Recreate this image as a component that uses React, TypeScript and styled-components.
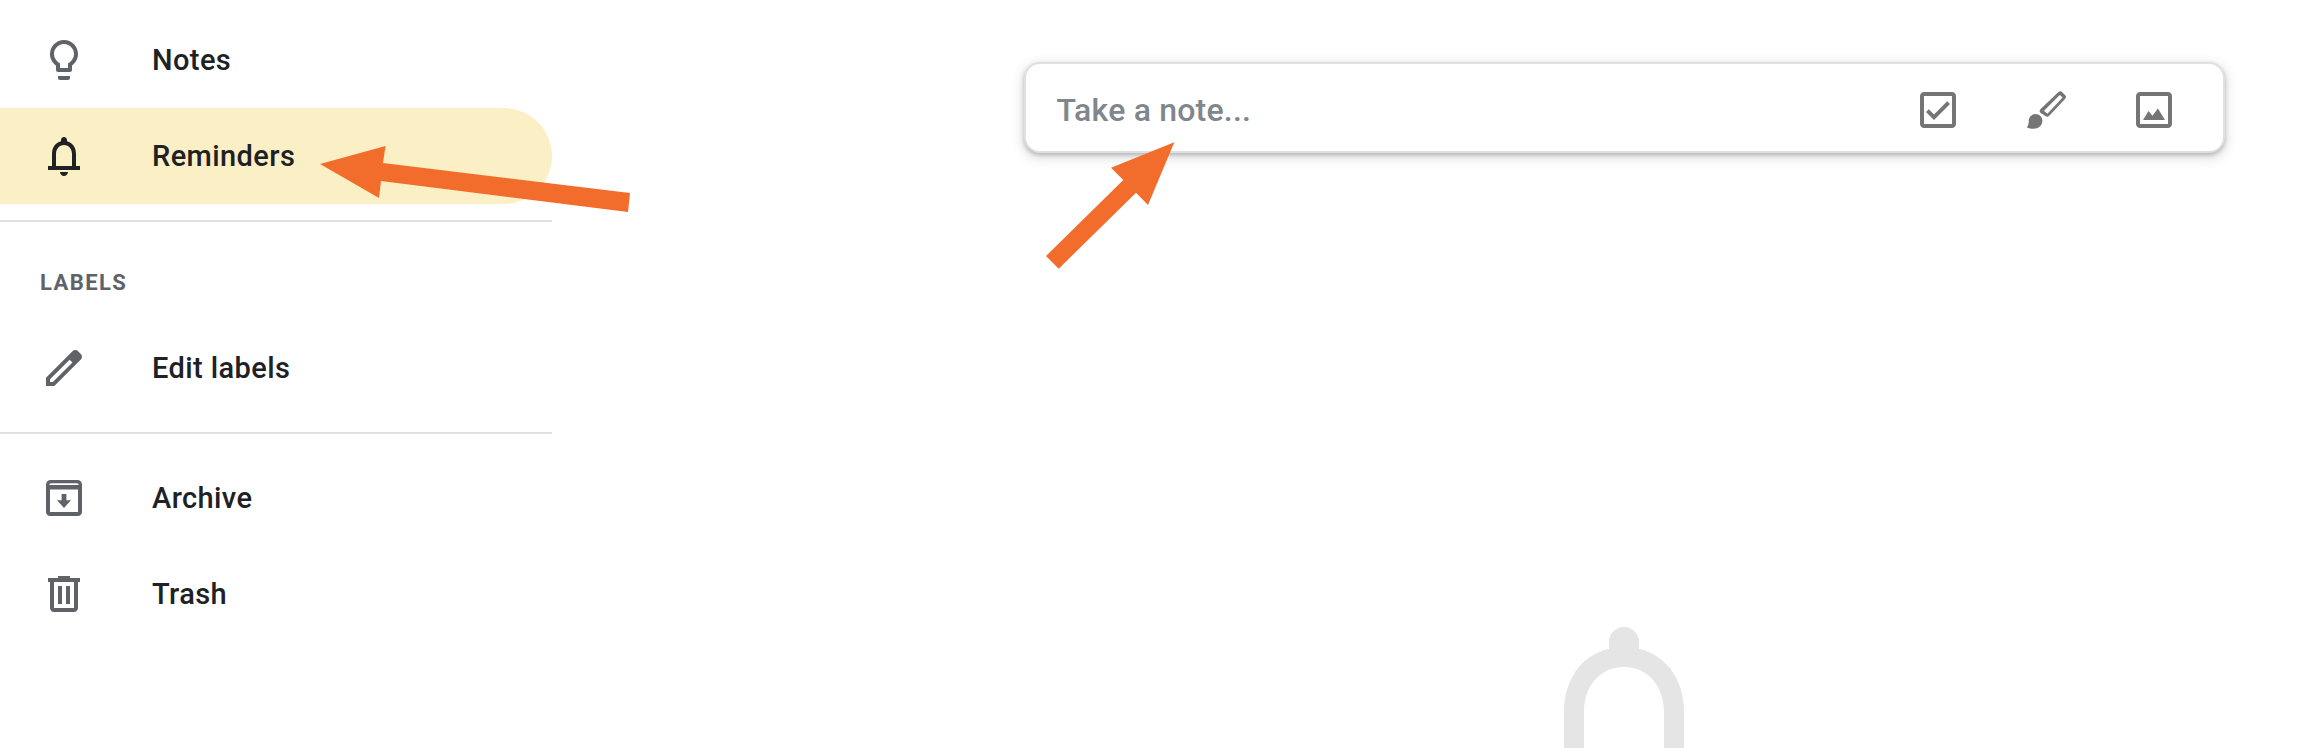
import React, { FC } from "react";
import styled, { createGlobalStyle } from "styled-components";

const GlobalStyle = createGlobalStyle`
  html, body {
    margin: 0;
    padding: 0;
    background: #fff;
    overflow: hidden;
  }
`;

const Page = styled.div`
  position: relative;
  display: flex;
  width: 2322px;
  height: 748px;
  overflow: hidden;
  font-family: Roboto, "Liberation Sans", sans-serif;
`;

const Sidebar = styled.nav`
  width: 552px;
  flex-shrink: 0;
  padding-top: 12px;
`;

const NavRow = styled.div<{ $active?: boolean }>`
  display: flex;
  align-items: center;
  gap: 64px;
  height: 96px;
  padding-left: 40px;
  border-radius: 0 48px 48px 0;
  background: ${(p) => (p.$active ? "#fbefc6" : "transparent")};
  color: ${(p) => (p.$active ? "#202124" : "#5f6368")};
`;

const NavLabel = styled.span`
  font-size: 29px;
  font-weight: 500;
  letter-spacing: 0.4px;
  color: #202124;
`;

const Divider = styled.hr`
  border: none;
  height: 2px;
  margin: 16px 0;
  background: #e0e0e0;
`;

const SectionTitle = styled.div`
  height: 98px;
  margin-top: -16px;
  padding: 41px 0 17px 40px;
  box-sizing: border-box;
  line-height: 40px;
  font-size: 22px;
  font-weight: 700;
  letter-spacing: 1.4px;
  color: #5f6368;
`;

const Main = styled.main`
  flex: 1;
  display: flex;
  flex-direction: column;
  align-items: center;
  padding-left: 374px;
`;

const NoteBar = styled.div`
  display: flex;
  align-items: center;
  justify-content: space-between;
  flex-shrink: 0;
  width: 1201px;
  height: 91px;
  margin-top: 62px;
  padding: 4px 45px 0 31px;
  box-sizing: border-box;
  border: 2px solid #e0e0e0;
  border-radius: 16px;
  background: #fff;
  box-shadow: 0 2px 4px rgba(60, 64, 67, 0.3), 0 4px 12px 2px rgba(60, 64, 67, 0.15);
`;

const Placeholder = styled.span`
  font-size: 32px;
  font-weight: 500;
  letter-spacing: 0.2px;
  color: #80868b;
`;

const BarActions = styled.div`
  display: flex;
  gap: 60px;
  color: #757575;
`;

const EmptyIcon = styled.div`
  flex-shrink: 0;
  margin-top: 449px;
  color: #e5e5e5;
`;

const ArrowLayer = styled.svg`
  position: absolute;
  top: 0;
  left: 0;
  pointer-events: none;
`;

const Icon: FC<{ d: string; size?: number }> = ({ d, size = 48 }) => (
  <svg width={size} height={size} viewBox="0 0 24 24" fill="currentColor" style={{ display: "block", flexShrink: 0 }}>
    <path d={d} fillRule="evenodd" />
  </svg>
);

const BELL =
  "M18 17v-6c0-3.07-1.63-5.64-4.5-6.32V4c0-.83-.67-1.5-1.5-1.5s-1.5.67-1.5 1.5v.68C7.63 5.36 6 7.92 6 11v6H4v2h16v-2h-2zm-2 0H8v-6c0-2.48 1.51-4.5 4-4.5s4 2.02 4 4.5v6zm-4 5c1.1 0 2-.9 2-2h-4c0 1.1.9 2 2 2z";
const BULB =
  "M9 21c0 .55.45 1 1 1h4c.55 0 1-.45 1-1v-1H9v1zm3-19C8.14 2 5 5.14 5 9c0 2.38 1.19 4.47 3 5.74V17c0 .55.45 1 1 1h6c.55 0 1-.45 1-1v-2.26c1.81-1.27 3-3.36 3-5.74 0-3.86-3.14-7-7-7zm2.85 11.1l-.85.6V16h-4v-2.3l-.85-.6C7.8 12.16 7 10.63 7 9c0-2.76 2.24-5 5-5s5 2.24 5 5c0 1.63-.8 3.16-2.15 4.1z";
const PENCIL =
  "M20.41 4.94l-1.35-1.35c-.78-.78-2.05-.78-2.83 0L3 16.82V21h4.18L20.41 7.77c.79-.78.79-2.05 0-2.83zm-14 14.12L5 19v-1.36l9.82-9.82 1.41 1.41-9.82 9.83z";
const ARCHIVE =
  "M18.6 3H5.4C4 3 3 4 3 5.4V19c0 1.1.9 2 2 2h14c1.1 0 2-.9 2-2V5.4C21 4 20 3 18.6 3zM5.6 4.6h12.8c.5 0 .8.3 1 .9H4.6c.2-.6.5-.9 1-.9zM5 19V7.7h14V19H5zm3.5-5.9h2.3V10h2.4v3.1h2.3L12 17z";
const TRASH =
  "M15 4V3H9v1H4v2h1v13c0 1.1.9 2 2 2h10c1.1 0 2-.9 2-2V6h1V4h-5zm2 15H7V6h10v13zM9 8h2v9H9zm4 0h2v9h-2z";
const FRAME = "M19 3H5c-1.1 0-2 .9-2 2v14c0 1.1.9 2 2 2h14c1.1 0 2-.9 2-2V5c0-1.1-.9-2-2-2zm0 16H5V5h14v14z";
const CHECK = FRAME + "M18 9l-1.4-1.4-6.6 6.6-2.6-2.6L6 13l4 4z";
const PICTURE = FRAME + "M13.96 11.29l-2.75 3.54-1.96-2.36L6.5 17h11z";
const BRUSH =
  "M6.8 14c-1.9 0-3.4 1.5-3.4 3.4 0 1.5-.3 2.5-1 3.2 1 .5 2.2.8 3.4.8 2.4 0 4.4-1.6 4.4-4 0-1.9-1.5-3.4-3.4-3.4z" +
  "M9.2 11.6L18.2 3c.6-.6 1.3-.5 1.8 0l1.6 1.6c.5.5.5 1.3 0 1.8L13.5 15c-.5.5-1.3.5-1.8 0l-2.5-1.6c-.5-.5-.5-1.3 0-1.8z" +
  "M11 12.4l1.7 1.5 7.6-8.1L18.9 4.5z";

interface NavItem {
  label: string;
  icon: string;
  active?: boolean;
}

const App: FC = () => {
  const top: NavItem[] = [
    { label: "Notes", icon: BULB },
    { label: "Reminders", icon: BELL, active: true },
  ];
  const bottom: NavItem[] = [
    { label: "Archive", icon: ARCHIVE },
    { label: "Trash", icon: TRASH },
  ];

  const renderRow = (item: NavItem) => (
    <NavRow key={item.label} $active={item.active}>
      <Icon d={item.icon} />
      <NavLabel>{item.label}</NavLabel>
    </NavRow>
  );

  return (
    <Page>
      <GlobalStyle />
      <Sidebar>
        {top.map(renderRow)}
        <Divider />
        <SectionTitle>LABELS</SectionTitle>
        {renderRow({ label: "Edit labels", icon: PENCIL })}
        <Divider />
        {bottom.map(renderRow)}
      </Sidebar>
      <Main>
        <NoteBar>
          <Placeholder>Take a note...</Placeholder>
          <BarActions>
            <Icon d={CHECK} />
            <Icon d={BRUSH} />
            <Icon d={PICTURE} />
          </BarActions>
        </NoteBar>
        <EmptyIcon>
          <Icon d={BELL} size={240} />
        </EmptyIcon>
      </Main>
      <ArrowLayer width={2322} height={748} viewBox="0 0 2322 748">
        <polygon
          fill="#f26d2b"
          points="320,164 385.5,146 383,163 630,193 628,212 381,181 379,198"
        />
        <polygon
          fill="#f26d2b"
          points="1174.3,142.3 1111,167.7 1123.3,180 1046,256 1058.7,268.7 1136,192.7 1148,205"
        />
      </ArrowLayer>
    </Page>
  );
};

export default App;
